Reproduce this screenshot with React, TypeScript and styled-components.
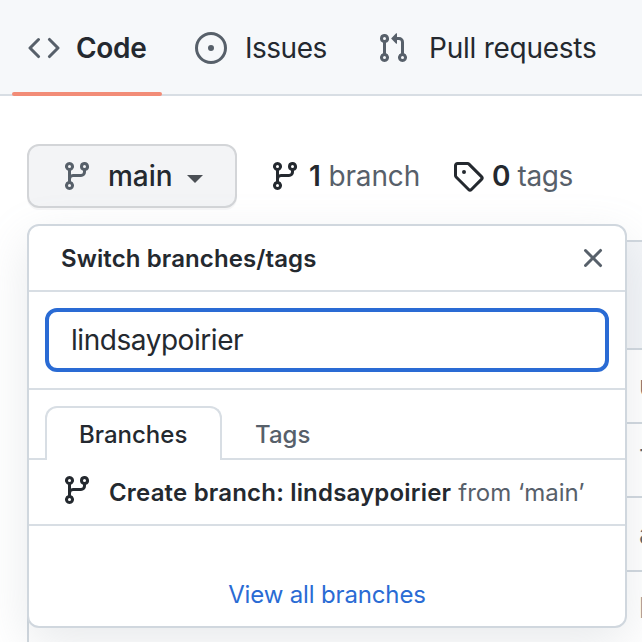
import React from "react";
import styled, { createGlobalStyle } from "styled-components";

const GlobalStyle = createGlobalStyle`
  * { box-sizing: border-box; }
  body {
    margin: 0;
    background: #fff;
    color: #24292f;
    font-family: Inter, "Liberation Sans", sans-serif;
    font-size: 28px;
    overflow: hidden;
  }
`;

const Page = styled.div`
  width: 642px;
  height: 642px;
  overflow: hidden;
`;

const Nav = styled.nav`
  display: flex;
  height: 96px;
  padding-left: 12px;
  background: #f6f8fa;
  border-bottom: 2px solid #d8dee4;
`;

const NavItem = styled.a<{ $width: number; $active?: boolean }>`
  position: relative;
  display: flex;
  align-items: center;
  flex: none;
  gap: 16px;
  width: ${(p) => p.$width}px;
  height: 96px;
  padding-left: 16px;
  font-weight: ${(p) => (p.$active ? 600 : 400)};
  white-space: nowrap;
  &::after {
    content: "";
    display: ${(p) => (p.$active ? "block" : "none")};
    position: absolute;
    left: 0;
    bottom: 0;
    width: 150px;
    height: 4px;
    border-radius: 2px;
    background: #f28c77;
  }
`;

const Label = styled.span<{ $spacing?: number; $gap?: number }>`
  letter-spacing: ${(p) => p.$spacing ?? 0}px;
  margin-left: ${(p) => p.$gap ?? 0}px;
  white-space: pre;
`;

const Toolbar = styled.div`
  display: flex;
  align-items: center;
  height: 64px;
  margin: 48px 0 0 27px;
`;

const BranchButton = styled.button`
  display: flex;
  align-items: center;
  width: 210px;
  height: 64px;
  padding: 0 0 0 32px;
  border: 2px solid #d3d5d8;
  border-radius: 12px;
  background: #f3f4f6;
  box-shadow: 0 2px 0 rgba(31, 35, 40, 0.04);
  color: #24292f;
  font: 500 28px Inter, sans-serif;
`;

const Caret = styled.span`
  width: 0;
  height: 0;
  margin: 5px 0 0 14px;
  border: 8px solid transparent;
  border-top-color: #4b4f55;
  border-bottom-width: 0;
`;

const Stat = styled.a<{ $gap: number }>`
  display: flex;
  align-items: center;
  margin-left: ${(p) => p.$gap}px;
  color: #57606a;
  white-space: nowrap;
  strong { color: #24292f; font-weight: 600; }
`;

const Content = styled.div`
  position: relative;
  margin: 32px 0 0 27px;
`;

const FileBox = styled.div`
  width: 700px;
  border: 2px solid #d0d7de;
  border-radius: 12px 12px 0 0;
`;

const FileHeader = styled.div`
  height: 106px;
  background: #f3f5f8;
  border-radius: 10px 10px 0 0;
`;

const FileRow = styled.div`
  display: flex;
  align-items: center;
  height: 74px;
  padding-left: 610px;
  border-top: 2px solid #d0d7de;
  color: #57606a;
  &:last-child { color: #8b9096; }
`;

const Menu = styled.section`
  position: absolute;
  top: -16px;
  left: 0;
  width: 600px;
  height: 404px;
  border: 2px solid #d0d7de;
  border-radius: 12px;
  background: #fff;
  box-shadow: 0 16px 48px rgba(140, 149, 159, 0.2);
  font-size: 24px;
`;

const MenuHeader = styled.header`
  display: flex;
  align-items: center;
  justify-content: space-between;
  height: 66px;
  padding: 0 16px 0 32px;
  border-bottom: 2px solid #d8dee4;
  font-weight: 600;
`;

const FilterRow = styled.div`
  height: 98px;
  padding: 16px;
  border-bottom: 2px solid #d8dee4;
`;

const FilterInput = styled.input`
  display: block;
  width: 564px;
  height: 64px;
  padding: 0 22px;
  border: 4px solid #2a6bd4;
  border-radius: 12px;
  outline: none;
  background: #fff;
  color: #24292f;
  font: 400 28px Inter, sans-serif;
  letter-spacing: -0.45px;
`;

const Tabs = styled.div`
  display: flex;
  height: 70px;
  padding: 16px 0 0 16px;
  box-shadow: inset 0 -2px #d8dee4;
`;

const Tab = styled.button<{ $selected?: boolean }>`
  height: 54px;
  padding: 1px 0 0 ${(p) => (p.$selected ? 32 : 31)}px;
  width: ${(p) => (p.$selected ? 177 : 122)}px;
  border: 2px solid ${(p) => (p.$selected ? "#d8dee4" : "transparent")};
  border-bottom: 0;
  border-radius: 12px 12px 0 0;
  background: ${(p) => (p.$selected ? "#fff" : "transparent")};
  color: ${(p) => (p.$selected ? "#24292f" : "#57606a")};
  font: 500 24px Inter, sans-serif;
  text-align: left;
`;

const CreateRow = styled.div`
  display: flex;
  align-items: center;
  height: 66px;
  padding-left: 32px;
  border-bottom: 2px solid #d8dee4;
  color: #57606a;
  white-space: nowrap;
  svg { margin-top: -4px; }
  strong { color: #24292f; font-weight: 600; }
`;

const Footer = styled.footer`
  padding-top: 54px;
  color: #2a6bd4;
  line-height: 30px;
  text-align: center;
`;

const Svg = styled.svg`
  display: block;
  flex: none;
  fill: currentColor;
`;

const paths = {
  code: "M4.72 3.22a.75.75 0 011.06 1.06L2.06 8l3.72 3.72a.75.75 0 11-1.06 1.06L.47 8.53a.75.75 0 010-1.06l4.25-4.25zm6.56 0a.75.75 0 10-1.06 1.06L13.94 8l-3.72 3.72a.75.75 0 101.06 1.06l4.25-4.25a.75.75 0 000-1.06l-4.25-4.25z",
  issue: "M8 9.5a1.5 1.5 0 100-3 1.5 1.5 0 000 3zM8 0a8 8 0 100 16A8 8 0 008 0zM1.5 8a6.5 6.5 0 1113 0 6.5 6.5 0 01-13 0z",
  pull: "M7.177 3.073L9.573.677A.25.25 0 0110 .854v4.792a.25.25 0 01-.427.177L7.177 3.427a.25.25 0 010-.354zM3.75 2.5a.75.75 0 100 1.5.75.75 0 000-1.5zm-2.25.75a2.25 2.25 0 113 2.122v5.256a2.251 2.251 0 11-1.5 0V5.372A2.25 2.25 0 011.5 3.25zM11 2.5h-1V4h1a1 1 0 011 1v5.628a2.251 2.251 0 101.5 0V5A2.5 2.5 0 0011 2.5zm1 10.25a.75.75 0 111.5 0 .75.75 0 01-1.5 0zM3.75 12a.75.75 0 100 1.5.75.75 0 000-1.5z",
  branch: "M11.75 2.5a.75.75 0 100 1.5.75.75 0 000-1.5zm-2.25.75a2.25 2.25 0 113 2.122V6A2.5 2.5 0 0110 8.5H6a1 1 0 00-1 1v1.128a2.251 2.251 0 11-1.5 0V5.372a2.25 2.25 0 111.5 0v1.836A2.492 2.492 0 016 7h4a1 1 0 001-1v-.628A2.25 2.25 0 019.5 3.25zM4.25 12a.75.75 0 100 1.5.75.75 0 000-1.5zM3.5 3.25a.75.75 0 111.5 0 .75.75 0 01-1.5 0z",
  tag: "M2.5 7.775V2.75a.25.25 0 01.25-.25h5.025a.25.25 0 01.177.073l6.25 6.25a.25.25 0 010 .354l-5.025 5.025a.25.25 0 01-.354 0l-6.25-6.25a.25.25 0 01-.073-.177zm-1.5 0V2.75C1 1.784 1.784 1 2.75 1h5.025c.464 0 .91.184 1.238.513l6.25 6.25a1.75 1.75 0 010 2.474l-5.026 5.026a1.75 1.75 0 01-2.474 0l-6.25-6.25A1.75 1.75 0 011 7.775zM6 5a1 1 0 100 2 1 1 0 000-2z",
  close: "M3.72 3.72a.75.75 0 011.06 0L8 6.94l3.22-3.22a.75.75 0 111.06 1.06L9.06 8l3.22 3.22a.75.75 0 11-1.06 1.06L8 9.06l-3.22 3.22a.75.75 0 01-1.06-1.06L6.94 8 3.72 4.78a.75.75 0 010-1.06z",
};

const Icon = ({ name, color = "#57606a" }: { name: keyof typeof paths; color?: string }) => (
  <Svg width="32" height="32" viewBox="0 0 16 16" color={color} aria-hidden="true">
    <path fillRule="evenodd" d={paths[name]} />
  </Svg>
);

const files = ["u", "T", "a", "l"];

export default function App() {
  return (
    <Page>
      <GlobalStyle />
      <Nav>
        <NavItem $width={167} $active><Icon name="code" /><Label $spacing={-0.3}>Code</Label></NavItem>
        <NavItem $width={182}><Icon name="issue" /><Label $spacing={-0.5} $gap={2}>Issues</Label></NavItem>
        <NavItem $width={260}><Icon name="pull" /><Label $spacing={-0.25} $gap={4}>Pull requests</Label></NavItem>
      </Nav>
      <Toolbar>
        <BranchButton>
          <Icon name="branch" />
          <Label $gap={15}>main</Label>
          <Caret />
        </BranchButton>
        <Stat $gap={32}>
          <Icon name="branch" color="#24292f" />
          <Label $gap={8} $spacing={-0.15}><strong>1</strong> branch</Label>
        </Stat>
        <Stat $gap={32}>
          <Icon name="tag" color="#24292f" />
          <Label $gap={8} $spacing={-0.4}><strong>0</strong> tags</Label>
        </Stat>
      </Toolbar>
      <Content>
        <FileBox>
          <FileHeader />
          {files.map((name) => <FileRow key={name}>{name}</FileRow>)}
        </FileBox>
        <Menu>
          <MenuHeader>
            <Label $spacing={0.1}>Switch branches/tags</Label>
            <Icon name="close" />
          </MenuHeader>
          <FilterRow><FilterInput defaultValue="lindsaypoirier" /></FilterRow>
          <Tabs>
            <Tab $selected><Label>Branches</Label></Tab>
            <Tab><Label>Tags</Label></Tab>
          </Tabs>
          <CreateRow>
            <Icon name="branch" color="#24292f" />
            <Label $gap={16} $spacing={0.18}><strong>Create branch: lindsaypoirier</strong></Label>
            <Label $gap={7}>from ‘main’</Label>
          </CreateRow>
          <Footer><Label $spacing={-0.15}>View all branches</Label></Footer>
        </Menu>
      </Content>
    </Page>
  );
}
